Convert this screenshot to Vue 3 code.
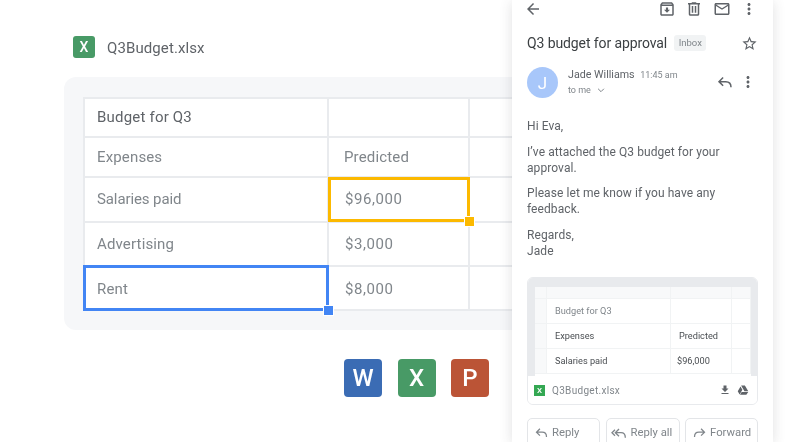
<script setup>
const rows = [
  { label: 'Budget for Q3', value: '', kind: 'title', val: '' },
  { label: 'Expenses', value: 'Predicted', kind: 'head', val: 'head' },
  { label: 'Salaries paid', value: '$96,000', kind: 'yellow', val: 'num sel' },
  { label: 'Advertising', value: '$3,000', kind: '', val: 'num' },
  { label: 'Rent', value: '$8,000', kind: 'blue sel', val: 'num low' }
]
const miniRows = [
  { label: 'Budget for Q3', value: '', cls: 'faint', val: '' },
  { label: 'Expenses', value: 'Predicted', cls: '', val: '' },
  { label: 'Salaries paid', value: '$96,000', cls: '', val: 'mini-num' }
]
</script>

<template>
  <div class="page">
    <section class="left">
      <header class="file">
        <span class="tile tile-small x">X</span>
        <span class="file-name">Q3Budget.xlsx</span>
      </header>
      <div class="card">
        <div class="sheet">
          <template v-for="r in rows" :key="r.label">
            <div class="cell" :class="r.kind">{{ r.label }}</div>
            <div class="cell val" :class="r.val">{{ r.value }}</div>
            <div class="cell"></div>
          </template>
        </div>
      </div>
      <div class="apps">
        <span class="tile w">W</span>
        <span class="tile x">X</span>
        <span class="tile p">P</span>
      </div>
    </section>

    <aside class="mail">
      <div class="toolbar">
        <svg class="ic back" viewBox="0 0 24 24"><path d="M20 11H7.83l5.59-5.59L12 4l-8 8 8 8 1.41-1.41L7.83 13H20v-2z"/></svg>
        <div class="tools">
          <svg class="ic" viewBox="0 0 24 24"><path d="M20.54 5.23l-1.39-1.68C18.88 3.21 18.47 3 18 3H6c-.47 0-.88.21-1.16.55L3.46 5.23C3.17 5.57 3 6.02 3 6.5V19c0 1.1.9 2 2 2h14c1.1 0 2-.9 2-2V6.5c0-.48-.17-.93-.46-1.27zM6.24 5h11.52l.81.97H5.44l.8-.97zM5 19V8h14v11H5zm8.45-9h-2.9v3H8l4 4 4-4h-2.55z"/></svg>
          <svg class="ic" viewBox="0 0 24 24"><path d="M15 4V3H9v1H4v2h1v13c0 1.1.9 2 2 2h10c1.1 0 2-.9 2-2V6h1V4h-5zm2 15H7V6h10v13zM9 8h2v9H9zm4 0h2v9h-2z"/></svg>
          <svg class="ic" viewBox="0 0 24 24"><path d="M22 6c0-1.1-.9-2-2-2H4c-1.1 0-2 .9-2 2v12c0 1.1.9 2 2 2h16c1.1 0 2-.9 2-2V6zm-2 0l-8 5-8-5h16zm0 12H4V8l8 5 8-5v10z"/></svg>
          <svg class="ic" viewBox="0 0 24 24"><path d="M12 8c1.1 0 2-.9 2-2s-.9-2-2-2-2 .9-2 2 .9 2 2 2zm0 2c-1.1 0-2 .9-2 2s.9 2 2 2 2-.9 2-2-.9-2-2-2zm0 6c-1.1 0-2 .9-2 2s.9 2 2 2 2-.9 2-2-.9-2-2-2z"/></svg>
        </div>
      </div>

      <div class="subject">
        <h1>Q3 budget for approval</h1>
        <span class="chip">Inbox</span>
        <svg class="ic star" viewBox="0 0 24 24"><path d="M22 9.24l-7.19-.62L12 2 9.19 8.63 2 9.24l5.46 4.73L5.82 21 12 17.27 18.18 21l-1.63-7.03L22 9.24zM12 15.4l-3.76 2.27 1-4.28-3.32-2.88 4.38-.38L12 6.1l1.71 4.04 4.38.38-3.32 2.88 1 4.28L12 15.4z"/></svg>
      </div>

      <div class="sender">
        <span class="avatar">J</span>
        <div class="who">
          <div class="who-top"><span class="name">Jade Williams</span><span class="time">11:45 am</span></div>
          <div class="to">to me
            <svg class="chev" viewBox="0 0 12 12"><path d="M2.5 4.5 6 8l3.5-3.5"/></svg>
          </div>
        </div>
        <svg class="stroke reply-top" viewBox="0 0 24 24"><path d="M9.5 6 4 11.5 9.5 17M4 11.500h9c4 0 7 2.500 7 7.500"/></svg>
        <svg class="ic dots" viewBox="0 0 24 24"><path d="M12 8c1.1 0 2-.9 2-2s-.9-2-2-2-2 .9-2 2 .9 2 2 2zm0 2c-1.1 0-2 .9-2 2s.9 2 2 2 2-.9 2-2-.9-2-2-2zm0 6c-1.1 0-2 .9-2 2s.9 2 2 2 2-.9 2-2-.9-2-2-2z"/></svg>
      </div>

      <div class="body">
        <p>Hi Eva,</p>
        <p>I’ve attached the Q3 budget for your approval.</p>
        <p>Please let me know if you have any feedback.</p>
        <p>Regards,<br>Jade</p>
      </div>

      <div class="attachment">
        <div class="preview">
          <div class="mini">
            <div class="mini-row mini-top"><span></span><span></span><span></span><span></span></div>
            <div v-for="m in miniRows" :key="m.label" class="mini-row">
              <span class="gutter"></span>
              <span :class="m.cls">{{ m.label }}</span>
              <span class="mini-val" :class="m.val">{{ m.value }}</span>
              <span></span>
            </div>
          </div>
        </div>
        <div class="att-foot">
          <span class="att-x">X</span>
          <span class="att-name">Q3Budget.xlsx</span>
          <svg class="att-ic" viewBox="0 0 24 24"><path d="M19 9h-4V3H9v6H5l7 7 7-7zM5 18v2h14v-2H5z"/></svg>
          <svg class="att-ic drive" viewBox="0 0 24 24"><path d="M8.2 3h7.600l6.700 11.500h-7.600zM7 4.800 10.800 11.400 5.200 21 1.500 14.500zM9.300 15.800h13.200L18.700 21.500H6z"/></svg>
        </div>
      </div>

      <div class="actions">
        <button>
          <svg class="stroke" viewBox="0 0 24 24"><path d="M9.500 6 4 11.500 9.500 17M4 11.500h9c4 0 7 2.500 7 7.500"/></svg>Reply
        </button>
        <button class="all">
          <svg class="stroke wide" viewBox="0 0 24 24"><path d="M6 7 1.500 11.500 6 16M12 6l-5.500 5.500L12 17M6.500 11.500H15c4 0 6.500 2.500 6.500 7.500"/></svg>Reply all
        </button>
        <button>
          <svg class="stroke" viewBox="0 0 24 24"><path d="M14.500 6 20 11.500 14.500 17M20 11.500h-9c-4 0-7 2.500-7 7.500"/></svg>Forward
        </button>
      </div>
    </aside>
  </div>
</template>

<style>
html, body { margin: 0; background: #fff; }
</style>

<style scoped>
.page {
  display: flex;
  width: 810px;
  height: 442px;
  overflow: hidden;
  background: #fff;
  font-family: Roboto, "Liberation Sans", sans-serif;
  color: #5f6368;
  filter: blur(.35px);
}
.left {
  flex: 0 0 448px;
  min-width: 0;
  margin-left: 64px;
  padding-top: 36px;
  box-sizing: border-box;
}
.file {
  display: flex;
  align-items: center;
  gap: 12px;
  margin-left: 9px;
  height: 22px;
}
.file-name { font-size: 15px; color: #5f6368; letter-spacing: .1px; padding-top: 2px; }
.tile {
  display: flex;
  align-items: center;
  justify-content: center;
  width: 38px;
  height: 38px;
  border-radius: 4px;
  color: #fff;
  font-size: 24px;
  font-weight: 500;
  font-family: Roboto, sans-serif;
}
.tile-small { width: 22px; height: 22px; font-size: 14px; border-radius: 3px; }
.x { background: #489a66; }
.w { background: #3b6cb4; }
.p { background: #bb5436; }

.card {
  width: 560px;
  height: 253px;
  margin-top: 19px;
  padding: 20px 20px 20px 19px;
  box-sizing: border-box;
  background: #f6f7f9;
  border-radius: 12px;
}
.sheet {
  display: grid;
  grid-template-columns: 242px 139px 200px;
  grid-template-rows: 37px 38px 43px 42px 42px;
  gap: 2px;
  padding: 2px;
  width: 590px;
  box-sizing: border-box;
  background: #e9ebee;
}
.cell {
  position: relative;
  display: flex;
  align-items: center;
  padding-left: 12px;
  padding-bottom: 1px;
  background: #fff;
  font-size: 15px;
  color: #80868b;
  letter-spacing: .15px;
}
.val { padding-left: 16px; }
.num { letter-spacing: .55px; }
.title { color: #5f6368; padding-bottom: 2px; letter-spacing: .2px; }
.head { color: #80868b; padding-bottom: 1px; }
.val.head { padding-left: 15px; }
.yellow { letter-spacing: -.1px; }
.yellow, .val.sel { padding-bottom: 2px; }
.blue, .low { padding-top: 1px; padding-bottom: 0; }
.cell.sel::before {
  content: "";
  position: absolute;
  inset: -1px -2px -1px -1px;
  border: 3px solid #fcb900;
  z-index: 1;
}
.cell.sel::after {
  content: "";
  position: absolute;
  right: -6px;
  bottom: -5px;
  width: 9px;
  height: 9px;
  background: #fcb900;
  outline: 1px solid #fff;
  z-index: 2;
}
.cell.blue.sel::before {
  inset: -2px;
  border-color: #4285f4;
}
.cell.blue.sel::after {
  right: -5.500px;
  bottom: -6px;
  background: #4285f4;
}
.apps {
  display: flex;
  gap: 15.500px;
  margin: 29px 0 0 280px;
}

.mail {
  position: relative;
  z-index: 3;
  flex: 0 0 261px;
  box-sizing: border-box;
  height: 442px;
  padding: 0 15px;
  background: #fff;
  box-shadow: 0 2px 12px rgba(60, 64, 67, .16);
}
.ic { width: 18px; height: 18px; fill: #5f6368; display: block; flex: none; }
.stroke { fill: none; stroke: #5f6368; stroke-width: 2; display: block; flex: none; }
.toolbar {
  display: flex;
  align-items: center;
  justify-content: space-between;
  height: 18px;
}
.back { margin-left: -3px; }
.tools { display: flex; gap: 9.500px; }
.subject {
  display: flex;
  align-items: center;
  margin-top: 16px;
  height: 18px;
}
.subject h1 {
  margin: 0;
  font-size: 14px;
  font-weight: 400;
  color: #3c4043;
  letter-spacing: -.1px;
  white-space: nowrap;
}
.chip {
  margin-left: 7px;
  padding: 0 4.500px;
  height: 16px;
  line-height: 16px;
  background: #f1f3f4;
  border-radius: 3px;
  font-size: 9.500px;
  color: #80868b;
}
.star { width: 17px; height: 17px; margin-left: auto; }
.sender {
  display: flex;
  align-items: flex-start;
  margin-top: 15px;
  height: 31px;
}
.avatar {
  display: flex;
  align-items: center;
  justify-content: center;
  width: 31px;
  height: 31px;
  border-radius: 50%;
  background: #a8c7fa;
  color: #fff;
  font-size: 17px;
  flex: none;
}
.who { margin-left: 10px; flex: 1; min-width: 0; padding-top: 1px; }
.who-top { display: flex; align-items: baseline; gap: 5.500px; height: 14px; }
.name { font-size: 10.700px; color: #5f6368; }
.time { font-size: 9px; color: #80868b; }
.to {
  display: flex;
  align-items: center;
  gap: 5px;
  margin-top: 3px;
  font-size: 9px;
  color: #80868b;
}
.chev { width: 10px; height: 10px; fill: none; stroke: #80868b; stroke-width: 1.200; }
.reply-top { width: 18px; height: 18px; margin-top: 6px; }
.dots { margin: 6px 1px 0 5px; }
.body {
  margin-top: 20px;
  font-size: 12px;
  line-height: 16px;
  color: #5f6368;
  letter-spacing: .08px;
}
.body p { margin: 0 0 9.500px; }
.attachment {
  margin-top: 18px;
  height: 128px;
  border: 1px solid #e8eaed;
  border-radius: 6px;
  box-sizing: border-box;
  overflow: hidden;
  display: flex;
  flex-direction: column;
}
.preview {
  flex: 0 0 98px;
  background: #e8eaed;
  padding: 9px 6px 0 7px;
  box-sizing: border-box;
  overflow: hidden;
}
.mini { background: #fff; height: 89px; }
.mini-row {
  display: grid;
  grid-template-columns: 12px 124px 61px 1fr;
  height: 25px;
  border-bottom: 1px solid #f1f3f4;
  box-sizing: border-box;
  font-size: 9.200px;
  color: #4a4e52;
  align-items: center;
}
.mini-row > span { height: 100%; display: flex; align-items: center; padding-left: 8px; box-sizing: border-box; border-right: 1px solid #f1f3f4; }
.mini-row > .gutter, .mini-top > span { padding: 0; background: #f8f9fa; }
.mini-top { height: 12px; }
.mini-row > .mini-num { padding-left: 6px; }
.faint { color: #80868b; }
.att-foot {
  flex: 1;
  display: flex;
  align-items: center;
  padding: 1px 8px 0 6px;
  background: #fff;
}
.att-x {
  width: 11px;
  height: 11px;
  background: #34a853;
  color: #fff;
  font-size: 8px;
  line-height: 11px;
  text-align: center;
  font-weight: 500;
}
.att-name { margin-left: 7px; font-size: 10px; letter-spacing: .3px; color: #80868b; flex: 1; }
.att-ic { width: 12px; height: 12px; fill: #5f6368; }
.drive { margin-left: 6px; }
.actions {
  display: grid;
  grid-template-columns: 73px 74px 73px;
  gap: 5.500px;
  margin-top: 13px;
}
.actions button {
  display: flex;
  align-items: center;
  gap: 3px;
  height: 30px;
  padding: 0 5px 0 6px;
  background: #fff;
  border: 1px solid #e3e5e8;
  border-radius: 5px;
  font-family: inherit;
  font-size: 11.300px;
  color: #80868b;
  white-space: nowrap;
}
.actions .all { gap: 3px; padding-left: 3px; }
.actions .stroke { width: 15px; height: 15px; stroke: #80868b; }
.actions .wide { width: 18px; height: 16px; }
</style>
